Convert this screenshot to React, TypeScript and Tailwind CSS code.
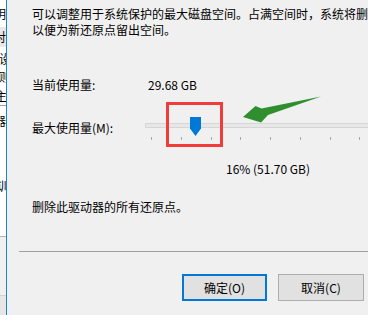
import React from "react"

const ticks = [0, 1, 2, 3, 4, 5, 6, 7]

function Fragment({ ch, h, shift = -6, bg = "" }: { ch: string; h: number; shift?: number; bg?: string }) {
  return (
    <div className={`flex items-center overflow-hidden ${bg}`} style={{ height: h }}>
      <span className="whitespace-nowrap text-[12px] leading-none text-black" style={{ marginLeft: shift }}>
        {ch}
      </span>
    </div>
  )
}

function BackWindow() {
  return (
    <div className="flex w-[6px] shrink-0 flex-col overflow-hidden bg-white">
      <div className="h-[6px]" />
      <Fragment ch="明" h={15} />
      <div className="h-[6px]" />
      <Fragment ch="对" h={20} bg="bg-[#e8e8e8]" />
      <div className="h-[3px]" />
      <Fragment ch="设" h={17} shift={-1} />
      <Fragment ch="则" h={20} shift={-2} />
      <Fragment ch="主" h={18} shift={-5} />
      <div className="h-px bg-[#a0a0a0]" />
      <Fragment ch="器" h={30} />
      <div className="h-[40px]" />
      <Fragment ch="训" h={20} shift={-3} />
      <div className="h-[40px]" />
      <div className="h-px bg-[#b4b4b4]" />
      <div className="h-[58px] bg-[#f0f0f0]" />
      <div className="h-px bg-[#d0d0d0]" />
      <div className="flex-1 bg-[#e6e6e6]" />
    </div>
  )
}

function Slider() {
  return (
    <div className="relative h-[30px] flex-1">
      <div className="absolute left-0 right-[-20px] top-[11px] h-[5px] border border-[#d6d6d6] bg-[#e7e7e7]" />
      <svg className="absolute left-[45px] top-[5px]" width="11" height="19" viewBox="0 0 11 19">
        <path d="M0 0H11V11.5L5.5 19L0 11.5Z" fill="#0078d7" />
      </svg>
      {ticks.map((i) => (
        <div
          key={i}
          className="absolute top-[25px] h-[3px] w-px bg-[#a6a6a6]"
          style={{ left: Math.round(6 + i * 29.75) }}
        />
      ))}
    </div>
  )
}

export default function App() {
  return (
    <div className="relative flex h-[315px] w-[368px] overflow-hidden bg-white font-['Noto_Sans_CJK_SC','Noto_Sans',sans-serif] text-[12px] text-black">
      <BackWindow />

      <div className="flex min-w-0 flex-1 flex-col border-l border-[#1883d7] bg-[#f0f0f0]">
        <div className="pl-[25px]">
          <div className="pt-[6px] leading-[16px] whitespace-nowrap">
            <p>可以调整用于系统保护的最大磁盘空间。占满空间时，系统将删除旧的还原点，</p>
            <p>以便为新还原点留出空间。</p>
          </div>

          <div className="mt-[38px] flex leading-[17px]">
            <span className="w-[116px]">当前使用量:</span>
            <span>29.68 GB</span>
          </div>

          <div className="mt-[19px] flex">
            <span className="w-[113px] pt-[7px] leading-[17px]">最大使用量(M):</span>
            <Slider />
          </div>

          <div className="mt-[18px] pl-[194px] leading-[17px]">16% (51.70 GB)</div>

          <div className="mt-[21px] leading-[17px]">删除此驱动器的所有还原点。</div>
        </div>

        <div className="ml-[12px] mt-[36px] h-px bg-[#a0a0a0]" />

        <div className="mt-[22px] flex justify-end gap-[11px] pr-[4px]">
          <button className="flex h-[27px] w-[85px] items-center justify-center border-2 border-[#0078d7] bg-[#e1e1e1]">
            确定(O)
          </button>
          <button className="flex h-[27px] w-[86px] items-center justify-center border border-[#adadad] bg-[#e1e1e1]">
            取消(C)
          </button>
        </div>
      </div>

      {/* annotations */}
      <div className="absolute left-[166px] top-[102px] h-[45px] w-[57px] border-[3px] border-[#f23b3b]" />
      <svg className="absolute left-0 top-0" width="368" height="315" viewBox="0 0 368 315">
        <path d="M243 117L255.5 106L261.5 108.5L321 96.5L268 115L261 122.5Z" fill="#2f8f2f" />
      </svg>
    </div>
  )
}
